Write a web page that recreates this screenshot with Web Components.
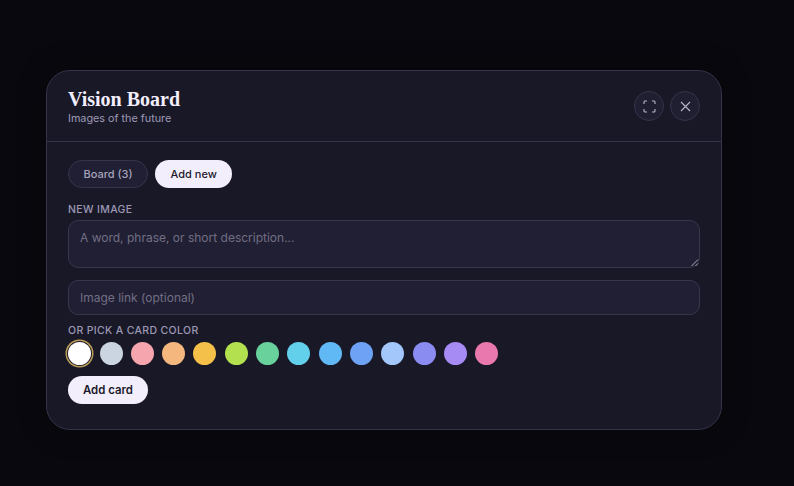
<!DOCTYPE html>
<html>
<head>
<meta charset="utf-8">
<title>Vision Board</title>
<style>
  html, body { margin: 0; height: 100%; }
  body {
    background: #09080e;
    font-family: Inter, "Liberation Sans", sans-serif;
    overflow: hidden;
    padding: 70px 0 0 46px;
    box-sizing: border-box;
  }
</style>
</head>
<body>

<template id="icon-button">
  <style>
    :host {
      display: flex;
      width: 30px;
      height: 30px;
      box-sizing: border-box;
      border-radius: 50%;
      border: 1px solid #36344c;
      background: #201f31;
      color: #b9b6cb;
      align-items: center;
      justify-content: center;
    }
  </style>
  <slot></slot>
</template>

<template id="pill-button">
  <style>
    :host {
      display: inline-flex;
      align-items: center;
      justify-content: center;
      box-sizing: border-box;
      height: 28px;
      padding: 0 14px;
      border-radius: 14px;
      font-size: 11.4px;
      font-weight: 600;
      border: 1px solid transparent;
      background: #f3eefc;
      color: #1c1a2b;
    }
    :host([tab]) {
      font-size: 11px;
      font-weight: 500;
      padding: 0 14.5px;
    }
    :host([ghost]) {
      background: #201f33;
      border-color: #36344c;
      color: #a7a4bd;
    }
  </style>
  <slot></slot>
</template>

<template id="field-label">
  <style>
    :host {
      display: block;
      font-size: 10.5px;
      line-height: 13px;
      font-weight: 500;
      letter-spacing: 0.35px;
      color: #9d99b5;
      text-transform: uppercase;
    }
  </style>
  <slot></slot>
</template>

<template id="text-field">
  <style>
    :host {
      display: block;
      box-sizing: border-box;
      border: 1px solid #38364e;
      border-radius: 10px;
      background: #211f33;
      color: #716f85;
      font-size: 12px;
      line-height: 16px;
      padding: 9px 11px 8px;
      position: relative;
    }
    :host([multi]) { height: 48px; }
    :host(:not([multi])) { height: 35px; }
    svg { display: none; position: absolute; right: 0; bottom: 0; }
    :host([multi]) svg { display: block; }
  </style>
  <slot></slot>
  <svg width="9" height="9" viewBox="0 0 9 9" fill="none" stroke="#a9a7b6" stroke-width="1">
    <path d="M1.5 8 8 1.5M5.5 8 8 5.5"/>
  </svg>
</template>

<template id="color-swatch">
  <style>
    :host {
      display: block;
      width: 23px;
      height: 23px;
      border-radius: 50%;
      background: var(--c);
    }
    :host([selected]) {
      box-shadow: 0 0 0 1px #1a1928, 0 0 0 2.5px #bb9c58;
    }
  </style>
</template>

<template id="vision-modal">
  <style>
    :host {
      display: block;
      width: 676px;
      height: 360px;
      box-sizing: border-box;
      border: 1px solid #34334a;
      border-radius: 24px;
      background: #191827;
      box-shadow: 0 0 30px #00000050;
      overflow: hidden;
    }
    header {
      display: flex;
      justify-content: space-between;
      align-items: center;
      height: 71px;
      box-sizing: border-box;
      padding: 0 21px;
      border-bottom: 1px solid #34334a;
    }
    .heading { padding-top: 2px; }
    h1 {
      margin: 0;
      font: 700 20px/22px "Liberation Serif", serif;
      color: #f3eefc;
    }
    p {
      margin: 2px 0 0;
      font-size: 10.8px;
      line-height: 14px;
      color: #9d99b5;
    }
    .actions { display: flex; gap: 6px; }
    main {
      display: flex;
      flex-direction: column;
      padding: 18px 21px 0;
    }
    .tabs { display: flex; gap: 7px; margin-bottom: 15px; }
    .new-label { margin-bottom: 4px; }
    .link { margin-top: 12px; margin-bottom: 9px; }
    .swatches { display: flex; gap: 8.3px; margin: 5px 0 11px 0.3px; }
    .submit { align-self: flex-start; }
  </style>
  <header>
    <div class="heading">
      <h1><slot name="title"></slot></h1>
      <p><slot name="subtitle"></slot></p>
    </div>
    <div class="actions"><slot name="actions"></slot></div>
  </header>
  <main>
    <div class="tabs"><slot name="tabs"></slot></div>
    <div class="new-label"><slot name="label-new"></slot></div>
    <slot name="description"></slot>
    <div class="link"><slot name="link"></slot></div>
    <slot name="label-color"></slot>
    <div class="swatches"><slot name="swatches"></slot></div>
    <div class="submit"><slot name="submit"></slot></div>
  </main>
</template>

<script>
  // every element here is just a template cloned into an open shadow root
  function define(tag) {
    customElements.define(tag, class extends HTMLElement {
      constructor() {
        super();
        const root = this.attachShadow({ mode: "open" });
        root.appendChild(document.getElementById(tag).content.cloneNode(true));
      }
    });
  }
  ["icon-button", "pill-button", "field-label", "text-field", "color-swatch", "vision-modal"].forEach(define);
</script>

<vision-modal>
  <span slot="title">Vision Board</span>
  <span slot="subtitle">Images of the future</span>
  <icon-button slot="actions">
    <svg width="13" height="13" viewBox="0 0 13 13" fill="none" stroke="currentColor" stroke-width="1.1">
      <path d="M1 4V2a1 1 0 0 1 1-1h2M9 1h2a1 1 0 0 1 1 1v2M12 9v2a1 1 0 0 1-1 1H9M4 12H2a1 1 0 0 1-1-1V9"/>
    </svg>
  </icon-button>
  <icon-button slot="actions">
    <svg width="13" height="13" viewBox="0 0 13 13" fill="none" stroke="currentColor" stroke-width="1.1">
      <path d="M2 2l9 9M11 2l-9 9"/>
    </svg>
  </icon-button>
  <pill-button slot="tabs" tab ghost>Board (3)</pill-button>
  <pill-button slot="tabs" tab>Add new</pill-button>
  <field-label slot="label-new">New image</field-label>
  <text-field slot="description" multi>A word, phrase, or short description...</text-field>
  <text-field slot="link">Image link (optional)</text-field>
  <field-label slot="label-color">Or pick a card color</field-label>
  <color-swatch slot="swatches" selected style="--c:#ffffff"></color-swatch>
  <color-swatch slot="swatches" style="--c:#cbd5e1"></color-swatch>
  <color-swatch slot="swatches" style="--c:#f4a5ae"></color-swatch>
  <color-swatch slot="swatches" style="--c:#f4b77d"></color-swatch>
  <color-swatch slot="swatches" style="--c:#f5c04a"></color-swatch>
  <color-swatch slot="swatches" style="--c:#b2e04f"></color-swatch>
  <color-swatch slot="swatches" style="--c:#69d19c"></color-swatch>
  <color-swatch slot="swatches" style="--c:#62d0ea"></color-swatch>
  <color-swatch slot="swatches" style="--c:#60b8f5"></color-swatch>
  <color-swatch slot="swatches" style="--c:#6ea2f5"></color-swatch>
  <color-swatch slot="swatches" style="--c:#a3c6fb"></color-swatch>
  <color-swatch slot="swatches" style="--c:#8b8cf2"></color-swatch>
  <color-swatch slot="swatches" style="--c:#a78bf5"></color-swatch>
  <color-swatch slot="swatches" style="--c:#e878ae"></color-swatch>
  <pill-button slot="submit">Add card</pill-button>
</vision-modal>

</body>
</html>
